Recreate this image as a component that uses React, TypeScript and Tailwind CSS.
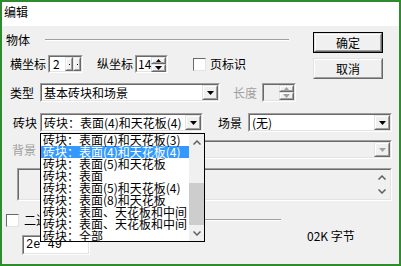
import React from 'react';

const Sunken = ({ className = '', inner = 'bg-white', children }: { className?: string; inner?: string; children?: React.ReactNode }) => (
  <div className={`border border-t-[#a0a0a0] border-l-[#a0a0a0] border-b-white border-r-white ${className}`}>
    <div className={`h-full w-full flex border border-t-[#696969] border-l-[#696969] border-b-[#e3e3e3] border-r-[#e3e3e3] ${inner}`}>{children}</div>
  </div>
);

const Raised = ({ className = '', children }: { className?: string; children?: React.ReactNode }) => (
  <div className={`border border-t-[#e3e3e3] border-l-[#e3e3e3] border-b-[#696969] border-r-[#696969] ${className}`}>
    <div className="h-full w-full flex items-center justify-center bg-[#f0f0f0] border border-t-white border-l-white border-b-[#a0a0a0] border-r-[#a0a0a0]">
      {children}
    </div>
  </div>
);

const Down = ({ color = '#000' }: { color?: string }) => (
  <svg width="7" height="4" viewBox="0 0 7 4">
    <polygon points="0,0 7,0 3.5,4" fill={color} />
  </svg>
);

const Up = ({ color = '#000' }: { color?: string }) => (
  <svg width="5" height="3" viewBox="0 0 5 3">
    <polygon points="0,3 5,3 2.5,0" fill={color} />
  </svg>
);

const Chevron = ({ up }: { up?: boolean }) => (
  <svg width="8" height="5" viewBox="0 0 8 5">
    <polyline points={up ? '0.5,4.5 4,1 7.5,4.5' : '0.5,0.5 4,4 7.5,0.5'} fill="none" stroke="#606060" strokeWidth="1.5" />
  </svg>
);

const Combo = ({ className = '', text, disabled }: { className?: string; text?: string; disabled?: boolean }) => (
  <Sunken className={className} inner={disabled ? 'bg-[#f0f0f0]' : 'bg-white'}>
    <div className="flex-1 pl-[2px] leading-[15px] overflow-hidden whitespace-nowrap">{text}</div>
    <Raised className="w-[16px] h-full">
      <Down color={disabled ? '#a0a0a0' : '#000'} />
    </Raised>
  </Sunken>
);

const Check = () => <div className="w-[13px] h-[13px] bg-white border border-t-[#696969] border-l-[#696969] border-b-[#e3e3e3] border-r-[#e3e3e3]" />;

const items = [
  '砖块：表面(4)和天花板(3)',
  '砖块：表面(4)和天花板(4)',
  '砖块：表面(5)和天花板',
  '砖块：表面',
  '砖块：表面(5)和天花板(4)',
  '砖块：表面(8)和天花板',
  '砖块：表面、天花板和中间',
  '砖块：表面、天花板和中间',
  '砖块：全部',
];

export default function App() {
  return (
    <div className="relative w-[401px] h-[266px] border-2 border-[#2e8b2e] bg-[#f0f0f0] text-[12px] text-black font-['Noto_Sans_CJK_SC',sans-serif] overflow-hidden">
      <div className="h-[24px] bg-white pl-[2px] pt-[3px] leading-[14px]">编辑</div>

      <div className="flex">
        <div className="w-[300px] pl-[4px]">
          <div className="mt-[7px] h-[14px] flex items-center leading-[14px]">
            <span>物体</span>
            <div className="flex-1 ml-[15px] mr-[13px] border-t border-t-[#a0a0a0] border-b border-b-white" />
          </div>

          <div className="mt-[8px] h-[18px] flex items-center">
            <span className="ml-[4px] w-[36px]">横坐标</span>
            <Sunken className="ml-[2px] w-[35px] h-full">
              <div className="flex-1 pl-[3px] leading-[14px]">2</div>
              <Raised className="w-[8px] h-full">
                <div className="w-[1px] h-[1px] bg-black" />
              </Raised>
              <Raised className="w-[8px] h-full">
                <div className="w-[1px] h-[1px] bg-black" />
              </Raised>
            </Sunken>
            <span className="ml-[14px] w-[36px]">纵坐标</span>
            <Sunken className="ml-[2px] w-[33px] h-full">
              <div className="flex-1 pl-[1px] leading-[14px]">14</div>
              <div className="w-[15px] h-full flex flex-col">
                <Raised className="flex-1">
                  <Up />
                </Raised>
                <Raised className="flex-1">
                  <Down />
                </Raised>
              </div>
            </Sunken>
            <div className="ml-[25px]">
              <Check />
            </div>
            <span className="ml-[4px]">页标识</span>
          </div>

          <div className="mt-[10px] h-[19px] flex items-center">
            <span className="ml-[4px] w-[24px]">类型</span>
            <Combo className="ml-[6px] w-[180px] h-full" text="基本砖块和场景" />
            <span className="ml-[13px] text-[#a0a0a0]">长度</span>
            <Sunken className="ml-[5px] w-[34px] h-full" inner="bg-[#f0f0f0]">
              <div className="flex-1" />
              <div className="w-[15px] h-full flex flex-col">
                <Raised className="flex-1">
                  <Up color="#a0a0a0" />
                </Raised>
                <Raised className="flex-1">
                  <Down color="#a0a0a0" />
                </Raised>
              </div>
            </Sunken>
          </div>
        </div>

        <div className="ml-[11px] pt-[6px] flex flex-col gap-[5px]">
          <div className="w-[70px] h-[21px] border border-black">
            <Raised className="w-full h-full">确定</Raised>
          </div>
          <Raised className="w-[70px] h-[21px]">取消</Raised>
        </div>
      </div>

      <div className="mt-[11px] h-[19px] flex items-center">
        <span className="ml-[11px] w-[24px]">砖块</span>
        <Combo className="ml-[3px] w-[163px] h-full" text="砖块：表面(4)和天花板(4)" />
        <span className="ml-[15px] w-[24px]">场景</span>
        <Combo className="ml-[6px] w-[144px] h-full" text="(无)" />
      </div>

      <div className="mt-[8px] h-[19px] flex items-center">
        <span className="ml-[10px] w-[24px] text-[#a0a0a0]">背景</span>
        <Combo className="ml-[4px] w-[352px] h-full" disabled />
      </div>

      <Sunken className="mt-[9px] ml-[15px] w-[375px] h-[33px]" inner="bg-[#f0f0f0]">
        <div className="flex-1" />
        <div className="w-[16px] h-full flex flex-col items-center justify-between py-[5px] bg-[#f0f0f0]">
          <Chevron up />
          <Chevron />
        </div>
      </Sunken>

      <div className="mt-[12px] h-[14px] flex items-center">
        <div className="ml-[4px]">
          <Check />
        </div>
        <span className="ml-[5px]">二进制数据</span>
        <div className="w-[195px] ml-[2px] border-t border-t-[#a0a0a0] border-b border-b-white" />
      </div>

      <div className="mt-[8px] flex items-start">
        <Sunken className="ml-[20px] w-[68px] h-[20px]">
          <div className="pl-[2px] leading-[16px] font-['Liberation_Mono',monospace]">2e 49</div>
        </Sunken>
        <span className="ml-[217px] -mt-[6px] leading-[14px]">02K 字节</span>
      </div>

      <div className="absolute left-[38px] top-[131px] w-[165px] h-[109px] border border-black bg-white flex overflow-hidden">
        <div className="flex-1 overflow-hidden">
          {items.map((t, i) => (
            <div
              key={i}
              className={`h-[12px] leading-[12px] pl-[2px] whitespace-nowrap ${i === 1 ? 'bg-[#3399ff] text-white' : ''}`}
            >
              {t}
            </div>
          ))}
        </div>
        <div className="w-[15px] h-full bg-[#f0f0f0] flex flex-col items-center">
          <div className="mt-[6px]">
            <Chevron up />
          </div>
          <div className="mt-[38px] w-full h-[42px] bg-[#cdcdcd]" />
          <div className="mt-[6px]">
            <Chevron />
          </div>
        </div>
      </div>
    </div>
  );
}
